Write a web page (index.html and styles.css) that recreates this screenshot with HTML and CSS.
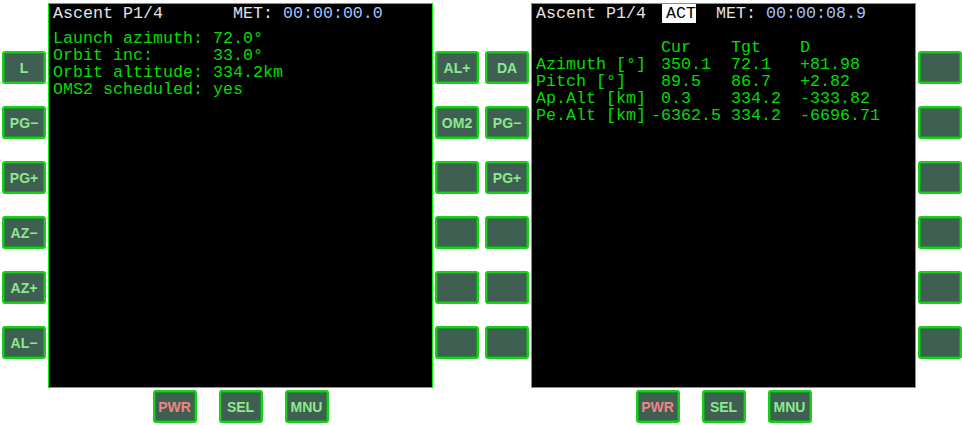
FILE: index.html
```html
<!DOCTYPE html>
<html>
<head>
<meta charset="utf-8">
<link rel="stylesheet" href="styles.css">
</head>
<body>
<div class="rack">
  <div class="mfd">
    <div class="side">
      <div class="btn">L</div>
      <div class="btn">PG&minus;</div>
      <div class="btn">PG+</div>
      <div class="btn">AZ&minus;</div>
      <div class="btn">AZ+</div>
      <div class="btn">AL&minus;</div>
    </div>
    <div class="center">
      <div class="screen">
        <div class="title">Ascent P1/4       MET: <span class="time">00:00:00.0</span></div>
        <div class="body left-body">
          <div class="ln">Launch azimuth: 72.0°</div>
          <div class="ln">Orbit inc:      33.0°</div>
          <div class="ln">Orbit altitude: 334.2km</div>
          <div class="ln">OMS2 scheduled: yes</div>
        </div>
      </div>
      <div class="bottom">
        <div class="btn pwr">PWR</div>
        <div class="btn">SEL</div>
        <div class="btn">MNU</div>
      </div>
    </div>
    <div class="side">
      <div class="btn">AL+</div>
      <div class="btn">OM2</div>
      <div class="btn"></div>
      <div class="btn"></div>
      <div class="btn"></div>
      <div class="btn"></div>
    </div>
  </div>
  <div class="mfd">
    <div class="side">
      <div class="btn">DA</div>
      <div class="btn">PG&minus;</div>
      <div class="btn">PG+</div>
      <div class="btn"></div>
      <div class="btn"></div>
      <div class="btn"></div>
    </div>
    <div class="center">
      <div class="screen">
        <div class="title">Ascent P1/4  <span class="act">ACT</span>  MET: <span class="time">00:00:08.9</span></div>
        <div class="body table">
          <div class="ln"></div><div class="ln"> Cur</div><div class="ln">Tgt</div><div class="ln">D</div>
          <div class="ln">Azimuth [°]</div><div class="ln"> 350.1</div><div class="ln">72.1</div><div class="ln">+81.98</div>
          <div class="ln">Pitch [°]</div><div class="ln"> 89.5</div><div class="ln">86.7</div><div class="ln">+2.82</div>
          <div class="ln">Ap.Alt [km]</div><div class="ln"> 0.3</div><div class="ln">334.2</div><div class="ln">-333.82</div>
          <div class="ln">Pe.Alt [km]</div><div class="ln">-6362.5</div><div class="ln">334.2</div><div class="ln">-6696.71</div>
        </div>
      </div>
      <div class="bottom">
        <div class="btn pwr">PWR</div>
        <div class="btn">SEL</div>
        <div class="btn">MNU</div>
      </div>
    </div>
    <div class="side">
      <div class="btn"></div>
      <div class="btn"></div>
      <div class="btn"></div>
      <div class="btn"></div>
      <div class="btn"></div>
      <div class="btn"></div>
    </div>
  </div>
</div>
</body>
</html>
```
FILE: styles.css
```css
html, body {
  margin: 0;
  padding: 0;
  background: #ffffff;
}
.rack {
  display: flex;
  gap: 2px;
  width: 962px;
  height: 425px;
  overflow: hidden;
}
.mfd {
  width: 481px;
  flex: none;
  display: flex;
  gap: 2px;
  padding-left: 2px;
  padding-top: 3px;
  box-sizing: border-box;
}
.side {
  width: 44px;
  flex: none;
  display: flex;
  flex-direction: column;
  gap: 22px;
  padding-top: 48px;
}
.center {
  width: 385px;
  flex: none;
  display: flex;
  flex-direction: column;
  align-items: center;
  gap: 2px;
}
.screen {
  width: 385px;
  height: 385px;
  box-sizing: border-box;
  background: #000;
  border: 1px solid #00f000;
  padding: 1px 0 0 4px;
  font-family: "Courier New", "Liberation Mono", monospace;
  font-size: 16.67px;
  line-height: 17px;
  color: #00dd00;
}
.title {
  color: #e4e4e4;
  white-space: pre;
  height: 17px;
}
.ln {
  white-space: pre;
  height: 17px;
}
.time {
  color: #a4c4ff;
}
.act {
  background: #ffffff;
  color: #000000;
  margin-left: -4px;
  padding-left: 4px;
}
.left-body {
  margin-top: 8px;
}
.table {
  margin-top: 17px;
  display: grid;
  grid-template-columns: 115px 80px 69px auto;
}
.bottom {
  display: flex;
  gap: 22px;
}
.btn {
  width: 44px;
  height: 33px;
  box-sizing: border-box;
  background: #3e5f52;
  border: 2px solid #18d018;
  border-radius: 3px;
  box-shadow: inset 0 0 0 1px #1a9a2a;
  display: flex;
  align-items: center;
  justify-content: center;
  font-family: "Liberation Sans", Arial, sans-serif;
  font-size: 14px;
  font-weight: bold;
  color: #8ee88e;
}
.btn.pwr {
  color: #f08484;
}
```
